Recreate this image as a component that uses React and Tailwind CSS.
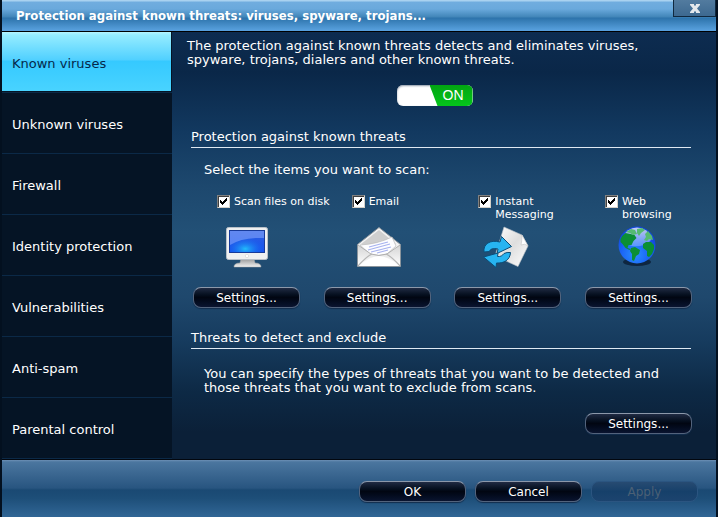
import React, { useState } from "react";

const sections = [
  "Known viruses",
  "Unknown viruses",
  "Firewall",
  "Identity protection",
  "Vulnerabilities",
  "Anti-spam",
  "Parental control",
];

function PillButton({ children, disabled = false }) {
  return (
    <button
      type="button"
      disabled={disabled}
      className="block h-[21px] w-[107px] rounded-lg border border-[#53637c] border-t-[#8c98aa] bg-linear-to-b from-[#202b43] via-[#010612] via-50% to-[#0a1430] text-center text-[12px] leading-4 text-white shadow-[0_1px_1px_#122d4d] disabled:border-[#2b5581] disabled:from-[#274b72] disabled:via-[#16406a] disabled:to-[#1c446f] disabled:text-[#4b6075] disabled:shadow-none"
    >
      {children}
    </button>
  );
}

function ScanCheckbox({ id, label, nowrap }) {
  return (
    <div className="flex h-[26px] items-start gap-1">
      <span className="relative block size-[13px] shrink-0">
        <input
          id={id}
          type="checkbox"
          defaultChecked
          className="peer block size-[13px] appearance-none border border-[#d4d0c8] border-t-[#808080] border-l-[#808080] bg-white shadow-[inset_1px_1px_0_#404040]"
        />
        <svg
          viewBox="0 0 13 13"
          className="pointer-events-none absolute inset-0 hidden size-[13px] peer-checked:block"
          shapeRendering="crispEdges"
          aria-hidden="true"
        >
          <path d="M3 5h1v1h1v1h1v-1h1v-1h1v-1h1v-1h1v3h-1v1h-1v1h-1v1h-1v1h-1v-1h-1v-1h-1z" fill="#000" />
        </svg>
      </span>
      <label
        htmlFor={id}
        className={`text-[11px] leading-[13px] ${nowrap ? "whitespace-nowrap" : ""}`}
      >
        {label}
      </label>
    </div>
  );
}

function MonitorIcon() {
  return (
    <svg viewBox="0 0 44 44" className="size-11" aria-hidden="true">
      <defs>
        <linearGradient id="mScreen" x1="0" y1="0" x2="0" y2="1">
          <stop offset="0" stopColor="#2f5fe0" />
          <stop offset="1" stopColor="#1552ee" />
        </linearGradient>
        <radialGradient id="mGlow" cx="0.45" cy="0.85" r="0.6">
          <stop offset="0" stopColor="#22bdfb" />
          <stop offset="1" stopColor="#1552ee" stopOpacity="0" />
        </radialGradient>
        <linearGradient id="mStand" x1="0" y1="0" x2="0" y2="1">
          <stop offset="0" stopColor="#999" />
          <stop offset="1" stopColor="#f1f1f1" />
        </linearGradient>
      </defs>
      <path d="M16 34h13l1 4q6 0 6 4H9q0-4 6-4z" fill="url(#mStand)" stroke="#aaa" strokeWidth="0.5" />
      <rect x="1.5" y="2.5" width="41" height="32" rx="2" fill="#eff0f1" stroke="#b9c0c8" />
      <rect x="4.5" y="5.5" width="35" height="22" fill="url(#mScreen)" stroke="#173a9a" />
      <rect x="5" y="6" width="34" height="21" fill="url(#mGlow)" />
      <path d="M5 6h34v7Q18 12 5 20z" fill="#94b1ff" fillOpacity="0.5" />
      <circle cx="22" cy="31" r="1.7" fill="#fff" stroke="#ccc" strokeWidth="0.5" />
    </svg>
  );
}

function MailIcon() {
  return (
    <svg viewBox="0 0 46 44" className="h-11 w-[46px]" aria-hidden="true">
      <defs>
        <linearGradient id="eBody" x1="0" y1="0" x2="0" y2="1">
          <stop offset="0" stopColor="#d4d4d4" />
          <stop offset="1" stopColor="#ffffff" />
        </linearGradient>
      </defs>
      <path d="M1.5 19.500L23 2.500l21.500 17V41.500h-43z" fill="#f2f2f2" stroke="#8b949c" />
      <path d="M5 19L23 5 40 19 30 27H16z" fill="#cfcfcf" />
      <path d="M4 20q18-1 32-8l4 9-9 8q-9 3-17 0z" fill="#fdfdff" stroke="#bcbcbc" strokeWidth="0.7" />
      <path d="M13 22l19-5M12 25l22-6M15 27l20-5M21 28l11-3" stroke="#a6b2ef" strokeWidth="1.1" />
      <path d="M2 20l13 9q8 3 16 0l13-9v21H2z" fill="url(#eBody)" />
      <path d="M2 20l13 9q8 3 16 0l13-9" fill="none" stroke="#a5a5a5" strokeWidth="0.8" />
      <path d="M2 41q9-10 14-12M44 41q-9-10-14-12" fill="none" stroke="#b5b5b5" strokeWidth="1.2" />
      <path d="M3 41q11-10 20-10t20 10z" fill="#fff" />
    </svg>
  );
}

function MessagingIcon() {
  return (
    <svg viewBox="0 0 48 44" className="h-11 w-12" aria-hidden="true">
      <defs>
        <linearGradient id="pSheet" x1="0" y1="0" x2="1" y2="1">
          <stop offset="0" stopColor="#fff" />
          <stop offset="0.5" stopColor="#dedede" />
          <stop offset="1" stopColor="#fff" />
        </linearGradient>
      </defs>
      <path d="M22 2L40 10l6 11-10 20.500L13 31z" fill="url(#pSheet)" stroke="#b5bdc4" strokeWidth="0.6" />
      <path d="M40 10q0 6-1 10 4-2 7 1z" fill="#fff" stroke="#c2c2c2" strokeWidth="0.6" />
      <path
        d="M2 27C1 19 8 14.500 18 17l1.500-5.500L29.500 21.500 15 28.500l1-4.500C11 23 8 24 7.500 26.500z"
        fill="#27b4f1"
        stroke="#0b4d78"
        strokeLinejoin="round"
      />
      <path
        d="M28.500 27.500C28 35 22 38.500 14.500 38L14 42.500 1.500 32 16 28l-.5 3.500c3 .5 5-1 6.500-3q3-1.500 6.500-1z"
        fill="#27b4f1"
        stroke="#0b4d78"
        strokeLinejoin="round"
      />
    </svg>
  );
}

function GlobeIcon() {
  return (
    <svg viewBox="0 0 40 44" className="h-11 w-10" aria-hidden="true">
      <defs>
        <radialGradient id="gSea" cx="0.45" cy="0.75" r="0.65">
          <stop offset="0" stopColor="#2b8fff" />
          <stop offset="0.6" stopColor="#1a63f5" />
          <stop offset="1" stopColor="#1246dc" />
        </radialGradient>
        <linearGradient id="gShine" x1="0" y1="0" x2="0" y2="1">
          <stop offset="0" stopColor="#fff" stopOpacity="0.75" />
          <stop offset="1" stopColor="#fff" stopOpacity="0.25" />
        </linearGradient>
      </defs>
      <ellipse cx="20" cy="37" rx="14" ry="4" fill="#0a1d35" fillOpacity="0.8" />
      <circle cx="20" cy="20" r="18.5" fill="url(#gSea)" />
      <path d="M5 13Q10 2.500 20 2.500T35 13q-2 5-8 7t-12 1q-8-2-10-8z" fill="url(#gShine)" />
      <g fill="#0b8f35">
        <path d="M3.500 14q2-4 5-6l5 1 4 1 2 3-3 3-2 4-3 0-1 3 3 1-1 1-4-2-3-4-2-2z" />
        <path d="M14 23l4-1 5 3-1 4-3 2-2 5-2-1v-6l-2-3z" />
        <path d="M26 19l3-2h5l3 3v4l-2 5-3 3-2-1v-5l-4-3z" />
      </g>
      <g fill="#55bb72">
        <path d="M9 7l5-3 4 1 2 4-4 1-3-2z" />
        <path d="M20 4l5-1 3 2-4 3-2 3-2-3zM28 9l3-3 4 5 1 4-4-1-2 2-3-1 2-3z" />
      </g>
    </svg>
  );
}

const scanItems = [
  { id: "disk", label: "Scan files on disk", icon: MonitorIcon, pad: "pl-6", iconPad: "pl-2", nowrap: true },
  { id: "email", label: "Email", icon: MailIcon, pad: "pl-7", iconPad: "pl-1" },
  { id: "im", label: "Instant Messaging", icon: MessagingIcon, pad: "pl-6", iconPad: "pl-1" },
  { id: "web", label: "Web browsing", icon: GlobeIcon, pad: "pl-5", iconPad: "pl-3" },
];

function SectionTitle({ children }) {
  return (
    <h2 className="mr-[25px] ml-[19px] border-b border-[#dfe9f2] pb-[2px] text-[13px] leading-4">
      {children}
    </h2>
  );
}

export default function App() {
  const [active, setActive] = useState(0);
  return (
    <div className="min-h-screen bg-[#03101f] px-[2px] font-['DejaVu_Sans',Verdana,sans-serif] text-white">
      <header className="flex h-8 items-start justify-between border-b border-black bg-[linear-gradient(#a9d2f0_0px,#a9d2f0_1px,#70addf_2px,#6aa9dc_9px,#4185b8_17px,#2d73ab_18px,#579fdc_30px)] pl-[14px]">
        <h1 className="font-['DejaVu_Sans_Condensed','DejaVu_Sans',sans-serif] text-[13px] leading-8 font-bold whitespace-nowrap">
          Protection against known threats: viruses, spyware, trojans...
        </h1>
        <button
          type="button"
          aria-label="Close"
          className="flex h-[17px] w-[43px] items-center justify-center border border-t-0 border-[#10283e] bg-linear-to-b from-[#527b9f] to-[#3d6990]"
        >
          <svg viewBox="0 0 10 9" className="h-[9px] w-[10px]" aria-hidden="true">
            <path d="M0 0h4v1l1 1 1-1V0h4v1L7 4.500 10 8v1H6V8L5 7 4 8v1H0V8l3-3.500L0 1z" fill="#e4e8ec" />
          </svg>
        </button>
      </header>

      <div className="flex border-b border-[#02070f]">
        <nav className="w-[170px] shrink-0 bg-[#051425]">
          {sections.map((name, i) => (
            <button
              key={name}
              type="button"
              onClick={() => setActive(i)}
              className={`block h-[61px] w-full border-b border-[#0b2947] pr-px pb-px text-left text-[13px] leading-4 ${
                i === active ? "text-[#06284a]" : "text-white"
              }`}
            >
              <span
                className={`flex h-[59px] items-center pt-1 pl-[10px] ${
                  i === active
                    ? "bg-[linear-gradient(#b5f4ff_0px,#95ecff_3px,#50d0ff_28px,#35c9ff_29px,#48d3ff_58px)]"
                    : ""
                }`}
              >
                {name}
              </span>
            </button>
          ))}
        </nav>

        <main className="min-w-0 flex-1 bg-[linear-gradient(#0d2c50_0px,#0a2748_40px,#123960_100px,#1d486e_155px,#225076_200px,#1f486d_265px,#163b5e_310px,#0d2945_360px,#0b2038_400px)]">
          <p className="mr-[25px] ml-[15px] pt-[7px] text-[13px] leading-[14px]">
            The protection against known threats detects and eliminates viruses,
            <br />
            spyware, trojans, dialers and other known threats.
          </p>
          <div className="mt-[18px] mb-[23px] flex justify-center pr-[19px]">
            <label className="relative flex h-[21px] w-[76px] justify-end overflow-hidden rounded-md bg-white shadow-[inset_0_1px_2px_#8b97a6]">
              <input
                type="checkbox"
                role="switch"
                aria-label="Protection against known threats"
                defaultChecked
                className="absolute inset-0 size-full appearance-none"
              />
              <span className="flex w-[43px] items-center justify-center bg-linear-to-b from-[#02a512] to-[#05c51b] pl-1 font-['Liberation_Sans',sans-serif] text-[14px] [clip-path:polygon(0_0,100%_0,100%_100%,8px_100%)]">
                ON
              </span>
            </label>
          </div>

          <SectionTitle>Protection against known threats</SectionTitle>
          <p className="mt-[14px] ml-8 text-[13px] leading-4">Select the items you want to scan:</p>
          <div className="mt-[17px] mr-6 mb-[22px] ml-[21px] flex justify-between">
            {scanItems.map(({ id, label, icon: Icon, pad, iconPad, nowrap }) => (
              <div key={id} className="w-[107px]">
                <div className={pad}>
                  <ScanCheckbox id={id} label={label} nowrap={nowrap} />
                  <div className={`mt-1 mb-[18px] h-11 ${iconPad}`}>
                    <Icon />
                  </div>
                </div>
                <PillButton>Settings...</PillButton>
              </div>
            ))}
          </div>

          <SectionTitle>Threats to detect and exclude</SectionTitle>
          <p className="mt-[18px] mr-[25px] ml-8 text-[13px] leading-[14px]">
            You can specify the types of threats that you want to be detected and
            <br />
            those threats that you want to exclude from scans.
          </p>
          <div className="mt-[18px] mr-6 flex justify-end">
            <PillButton>Settings...</PillButton>
          </div>
        </main>
      </div>

      <footer className="flex h-[57px] items-start justify-end gap-[9px] bg-[linear-gradient(#6d90b5_0px,#4b769f_2px,#285580_28px,#1a4973_30px,#1d4e78_38px,#306594_56px)] pt-[21px] pr-[18px]">
        <PillButton>OK</PillButton>
        <PillButton>Cancel</PillButton>
        <PillButton disabled>Apply</PillButton>
      </footer>
    </div>
  );
}
